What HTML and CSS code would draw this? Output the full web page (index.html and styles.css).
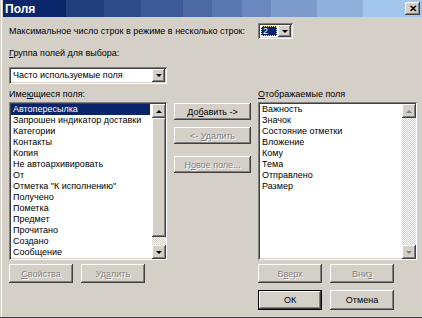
FILE: index.html
```html
<!doctype html>
<html>
  <head>
    <title>Поля</title>
    <link rel="stylesheet" href="styles.css">
  </head>
  <body>
    <div class="window">
      <div class="titlebar">
        <span class="title">Поля</span>
        <span class="close">&#x2715;</span>
      </div>

      <div class="content">
        <div class="row-lines">
          <span class="lines-label">Максимальное число строк в режиме в несколько строк:</span>
          <div class="combo small">
            <span class="combo-value"><span class="sel">2</span></span>
            <span class="drop"><i class="tri down"></i></span>
          </div>
        </div>

        <div class="label group-label"><u>Г</u>руппа полей для выбора:</div>

        <div class="combo wide">
          <span class="combo-value">Часто используемые поля</span>
          <span class="drop"><i class="tri down"></i></span>
        </div>

        <div class="main">
          <div class="label">Име<u>ю</u>щиеся поля:</div>
          <div></div>
          <div class="label"><u>О</u>тображаемые поля</div>

          <div class="listbox">
            <ul class="items">
              <li class="selected">Автопересылка</li>
              <li>Запрошен индикатор доставки</li>
              <li>Категории</li>
              <li>Контакты</li>
              <li>Копия</li>
              <li>Не автоархивировать</li>
              <li>От</li>
              <li>Отметка "К исполнению"</li>
              <li>Получено</li>
              <li>Пометка</li>
              <li>Предмет</li>
              <li>Прочитано</li>
              <li>Создано</li>
              <li>Сообщение</li>
            </ul>
            <div class="scrollbar">
              <span class="arrow"><i class="tri up"></i></span>
              <span class="thumb"></span>
              <span class="track"></span>
              <span class="arrow"><i class="tri down"></i></span>
            </div>
          </div>

          <div class="middle">
            <button class="btn mid">До<u>б</u>авить -&gt;</button>
            <button class="btn mid off">&lt;- <u>У</u>далить</button>
            <button class="btn mid off gap">Н<u>о</u>вое поле...</button>
          </div>

          <div class="listbox">
            <ul class="items">
              <li>Важность</li>
              <li>Значок</li>
              <li>Состояние отметки</li>
              <li>Вложение</li>
              <li>Кому</li>
              <li>Тема</li>
              <li>Отправлено</li>
              <li>Размер</li>
            </ul>
            <div class="scrollbar">
              <span class="arrow"><i class="tri up grey"></i></span>
              <span class="track"></span>
              <span class="arrow"><i class="tri down grey"></i></span>
            </div>
          </div>

          <div class="btn-row">
            <button class="btn off"><u>С</u>войства</button>
            <button class="btn off">Уд<u>а</u>лить</button>
          </div>
          <div></div>
          <div class="btn-row">
            <button class="btn off">В<u>в</u>ерх</button>
            <button class="btn off">Вни<u>з</u></button>
          </div>

          <div></div>
          <div></div>
          <div class="btn-row last">
            <button class="btn default">ОК</button>
            <button class="btn">Отмена</button>
          </div>
        </div>
      </div>
    </div>
  </body>
</html>
```

FILE: styles.css
```css
body {
    margin: 0;
    width: 422px;
    height: 318px;
    overflow: hidden;
    background: #d4d0c8;
    font-family: "Liberation Sans", Arial, sans-serif;
    font-size: 9px;
    color: #000;
}

.window {
    height: 318px;
    box-sizing: border-box;
    border-bottom: 1px solid #404040;
    box-shadow: inset 1px 0 #d4d0c8, inset 2px 0 #fff;
}

.titlebar {
    height: 17px;
    margin-left: 3px;
    display: flex;
    align-items: center;
    justify-content: space-between;
    background: linear-gradient(to right,
        #0c266b 0 15%, #213e7d 15% 24%, #2e4b8a 24% 33%, #3c5a97 33% 43%,
        #4c69a4 43% 50%, #5a78b0 50% 57%, #6a88bd 57% 64%, #7c9aca 64% 75%,
        #8fb0db 75% 86%, #a3c6ec 86% 100%);
}

.title {
    color: #fff;
    font-weight: bold;
    font-size: 12px;
    padding-left: 2px;
}

.close {
    width: 15px;
    height: 13px;
    margin-right: 2px;
    background: #d4d0c8;
    font-size: 10px;
    font-weight: bold;
    line-height: 13px;
    text-align: center;
    box-shadow: inset -1px -1px #404040, inset 1px 1px #fff, inset -2px -2px #808080;
}

.content {
    padding: 6px 6px 0 9px;
}

.row-lines {
    display: flex;
    align-items: center;
    height: 16px;
}

.lines-label {
    width: 249px;
    white-space: nowrap;
}

.label {
    height: 11px;
    line-height: 11px;
    white-space: nowrap;
}

.group-label {
    margin-top: 9px;
}

/* combo boxes */
.combo {
    display: flex;
    box-sizing: border-box;
    background: #fff;
    padding: 2px;
    box-shadow: inset 1px 1px #808080, inset -1px -1px #fff, inset 2px 2px #404040, inset -2px -2px #d4d0c8;
}

.combo.small {
    width: 35px;
    height: 16px;
}

.combo.wide {
    width: 158px;
    height: 17px;
    margin-top: 8px;
}

.combo-value {
    flex: 1;
    line-height: 13px;
    padding-left: 2px;
    white-space: nowrap;
}

.combo.small .combo-value {
    padding: 1px;
    display: flex;
}

.sel {
    flex: 1;
    background: #0a246a;
    color: #fff;
    line-height: 10px;
    outline: 1px dotted #e8dc8c;
    outline-offset: -1px;
    padding-left: 2px;
}

.drop {
    width: 13px;
    display: flex;
    align-items: center;
    justify-content: center;
    background: #d4d0c8;
    box-shadow: inset -1px -1px #404040, inset 1px 1px #fff, inset -2px -2px #808080;
}

.tri {
    width: 0;
    height: 0;
    border-left: 3px solid transparent;
    border-right: 3px solid transparent;
}

.tri.down {
    border-top: 3px solid #000;
}

.tri.up {
    border-bottom: 3px solid #000;
}

.tri.grey.down {
    border-top-color: #808080;
}

.tri.grey.up {
    border-bottom-color: #808080;
}

/* main area */
.main {
    display: grid;
    grid-template-columns: 158px 77px 159px;
    column-gap: 7px;
    margin-top: 5px;
}

.listbox {
    margin-top: 2px;
    height: 158px;
    display: flex;
    box-sizing: border-box;
    padding: 2px 1px 1px 2px;
    background: #fff;
    box-shadow: inset 1px 1px #808080, inset -1px -1px #fff, inset 2px 2px #404040, inset -2px -2px #d4d0c8;
}

.items {
    flex: 1;
    min-width: 0;
    list-style: none;
    margin: 0;
    padding: 0;
    overflow: hidden;
}

.items li {
    height: 11px;
    line-height: 11px;
    padding-left: 2px;
    white-space: nowrap;
}

.items li.selected {
    background: #0a246a;
    color: #fff;
    margin-right: 2px;
}

.scrollbar {
    width: 14px;
    flex: none;
    display: flex;
    flex-direction: column;
}

.arrow, .thumb {
    height: 14px;
    display: flex;
    align-items: center;
    justify-content: center;
    background: #d4d0c8;
    box-shadow: inset -1px -1px #404040, inset 1px 1px #fff, inset -2px -2px #808080;
}

.thumb {
    height: 119px;
}

.track {
    flex: 1;
    background-image: conic-gradient(#d4d0c8 25%, #fff 0 50%, #d4d0c8 0 75%, #fff 0);
    background-size: 2px 2px;
}

.middle {
    display: flex;
    flex-direction: column;
    gap: 7px;
    padding-top: 3px;
}

/* buttons */
.btn {
    font: inherit;
    height: 19px;
    padding: 0;
    border: 0;
    background: #d4d0c8;
    color: #000;
    box-shadow: inset -1px -1px #404040, inset 1px 1px #fff, inset -2px -2px #808080;
}

.btn.mid {
    height: 17px;
    width: 77px;
}

.btn.gap {
    margin-top: 5px;
}

.btn.off {
    color: #808080;
    text-shadow: 1px 1px #fff;
}

.btn.default {
    border: 1px solid #000;
    height: 20px;
}

.btn-row {
    display: flex;
    gap: 8px;
    margin-top: 4px;
}

.btn-row .btn {
    width: 64px;
}

.btn-row.last {
    margin-top: 7px;
}

.btn-row.last .btn {
    height: 20px;
}
```
